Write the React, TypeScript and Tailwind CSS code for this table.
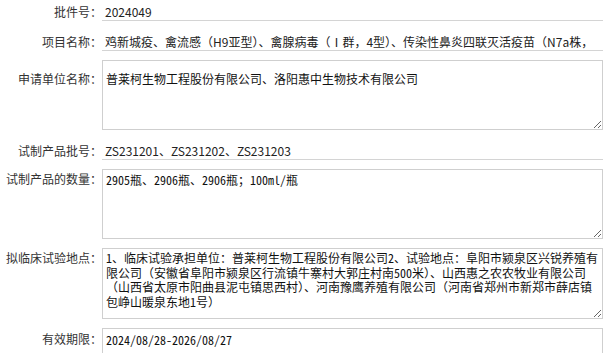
const cjk = "font-['Noto_Sans_CJK_SC','Microsoft_YaHei',sans-serif]";
const mono = "font-['Noto_Sans_Mono_CJK_SC','Liberation_Mono','Noto_Sans_CJK_SC',monospace]";

function Label({ text, pad }: { text: string; pad: string }) {
  return (
    <div className={`w-[102px] shrink-0 text-right text-[12px] leading-[16px] text-[#333] ${pad} ${cjk}`}>
      {text}
    </div>
  );
}

function LineField({ label, value }: { label: string; value: string }) {
  return (
    <div className="flex items-start">
      <Label text={label} pad="pt-[4px]" />
      <div
        className={`flex-1 h-[21px] border-b border-[#d4d4d4] pl-[3px] pt-[4px] text-[12px] leading-[16px] text-[#222] whitespace-nowrap overflow-hidden ${cjk}`}
      >
        {value}
      </div>
    </div>
  );
}

export default function App() {
  return (
    <div className="w-[612px] h-[353px] overflow-hidden bg-white">
      <div className="flex flex-col gap-[9px] w-[603px]">
        <LineField label="批件号：" value="2024049" />
        <LineField
          label="项目名称："
          value="鸡新城疫、禽流感（H9亚型）、禽腺病毒（Ⅰ群，4型）、传染性鼻炎四联灭活疫苗（N7a株，"
        />

        <div className="flex items-start">
          <Label text="申请单位名称：" pad="pt-[11px]" />
          <textarea
            readOnly
            defaultValue="普莱柯生物工程股份有限公司、洛阳惠中生物技术有限公司"
            className={`flex-1 h-[70px] border border-[#cfcfcf] pl-[3px] pt-[10px] text-[12px] leading-[16px] text-[#111] outline-none ${cjk}`}
          />
        </div>

        <LineField label="试制产品批号：" value="ZS231201、ZS231202、ZS231203" />

        <div className="flex items-start">
          <Label text="试制产品的数量：" pad="pt-[2px]" />
          <textarea
            readOnly
            defaultValue="2905瓶、2906瓶、2906瓶；100ml/瓶"
            className={`flex-1 h-[70px] border border-[#cfcfcf] pl-[3px] pt-[2px] text-[12px] leading-[16px] text-[#111] outline-none ${mono}`}
          />
        </div>

        <div className="flex items-start">
          <Label text="拟临床试验地点：" pad="pt-[2px]" />
          <textarea
            readOnly
            defaultValue="1、临床试验承担单位：普莱柯生物工程股份有限公司2、试验地点：阜阳市颍泉区兴锐养殖有限公司（安徽省阜阳市颍泉区行流镇牛寨村大郭庄村南500米）、山西惠之农农牧业有限公司（山西省太原市阳曲县泥屯镇思西村）、河南豫鹰养殖有限公司（河南省郑州市新郑市薛店镇包峥山暖泉东地1号）"
            className={`flex-1 h-[71px] border border-[#cfcfcf] pl-[3px] pr-[2px] pt-[2px] text-[12px] leading-[14.5px] text-[#111] outline-none ${mono}`}
          />
        </div>

        <div className="flex items-start">
          <Label text="有效期限：" pad="pt-[3px]" />
          <div
            className={`flex-1 h-[30px] border border-[#cfcfcf] pl-[3px] pt-[3px] text-[12px] leading-[16px] text-[#111] ${mono}`}
          >
            2024/08/28-2026/08/27
          </div>
        </div>
      </div>
    </div>
  );
}
